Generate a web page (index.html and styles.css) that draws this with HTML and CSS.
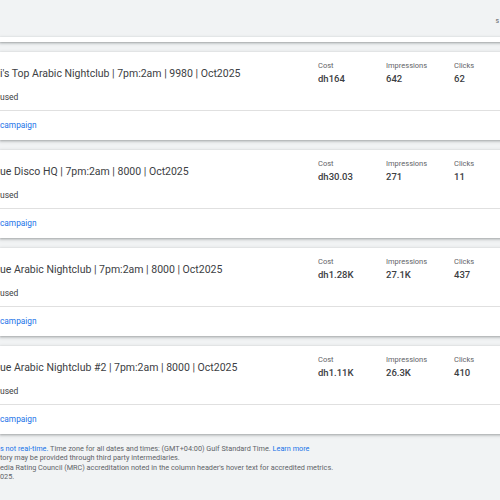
FILE: index.html
```html
<!DOCTYPE html>
<html>
<head>
<meta charset="utf-8">
<link rel="stylesheet" href="styles.css">
</head>
<body>
<div class="page">
  <div class="topbar"><span class="topbar-text">s</span></div>
  <div class="strip"></div>
  <div class="list">
    <div class="card">
      <div class="card-main">
        <div class="info">
          <div class="title">i's Top Arabic Nightclub | 7pm:2am | 9980 | Oct2025</div>
          <div class="status">used</div>
        </div>
        <div class="metric"><div class="label">Cost</div><div class="value">dh164</div></div>
        <div class="metric"><div class="label">Impressions</div><div class="value">642</div></div>
        <div class="metric"><div class="label">Clicks</div><div class="value">62</div></div>
      </div>
      <div class="card-foot"><a class="link">campaign</a></div>
    </div>
    <div class="card">
      <div class="card-main">
        <div class="info">
          <div class="title">ue Disco HQ | 7pm:2am | 8000 | Oct2025</div>
          <div class="status">used</div>
        </div>
        <div class="metric"><div class="label">Cost</div><div class="value">dh30.03</div></div>
        <div class="metric"><div class="label">Impressions</div><div class="value">271</div></div>
        <div class="metric"><div class="label">Clicks</div><div class="value">11</div></div>
      </div>
      <div class="card-foot"><a class="link">campaign</a></div>
    </div>
    <div class="card">
      <div class="card-main">
        <div class="info">
          <div class="title">ue Arabic Nightclub | 7pm:2am | 8000 | Oct2025</div>
          <div class="status">used</div>
        </div>
        <div class="metric"><div class="label">Cost</div><div class="value">dh1.28K</div></div>
        <div class="metric"><div class="label">Impressions</div><div class="value">27.1K</div></div>
        <div class="metric"><div class="label">Clicks</div><div class="value">437</div></div>
      </div>
      <div class="card-foot"><a class="link">campaign</a></div>
    </div>
    <div class="card">
      <div class="card-main">
        <div class="info">
          <div class="title">ue Arabic Nightclub #2 | 7pm:2am | 8000 | Oct2025</div>
          <div class="status">used</div>
        </div>
        <div class="metric"><div class="label">Cost</div><div class="value">dh1.11K</div></div>
        <div class="metric"><div class="label">Impressions</div><div class="value">26.3K</div></div>
        <div class="metric"><div class="label">Clicks</div><div class="value">410</div></div>
      </div>
      <div class="card-foot"><a class="link">campaign</a></div>
    </div>
  </div>
  <div class="footer">
    <div class="fline"><a class="flink">s not real-time.</a> Time zone for all dates and times: (GMT+04:00) Gulf Standard Time. <a class="flink">Learn more</a></div>
    <div class="fline">tory may be provided through third party intermediaries.</div>
    <div class="fline">edia Rating Council (MRC) accreditation noted in the column header's hover text for accredited metrics.</div>
    <div class="fline">025.</div>
  </div>
</div>
</body>
</html>
```
FILE: styles.css
```css
html, body {
  margin: 0;
  padding: 0;
}
body {
  width: 500px;
  height: 500px;
  overflow: hidden;
  background: #f1f3f4;
  font-family: Roboto, "Liberation Sans", sans-serif;
  color: #3c4043;
}
.page {
  width: 500px;
}
.topbar {
  height: 37px;
  display: flex;
  justify-content: flex-end;
  align-items: flex-start;
}
.topbar-text {
  font-size: 7px;
  line-height: 10px;
  margin-top: 16px;
  margin-right: 1px;
  color: #5f6368;
}
.strip {
  height: 5px;
  background: #fff;
  margin-right: -40px;
  box-shadow: 0 1px 2px 0 rgba(60,64,67,.3), 0 1px 3px 1px rgba(60,64,67,.15);
}
.list {
  display: flex;
  flex-direction: column;
  gap: 10px;
  padding-top: 10px;
}
.card {
  background: #fff;
  margin-right: -40px;
  box-shadow: 0 1px 2px 0 rgba(60,64,67,.3), 0 1px 3px 1px rgba(60,64,67,.15);
}
.card-main {
  display: grid;
  grid-template-columns: 318px 68px 68px 68px;
  height: 58px;
  border-bottom: 1px solid #e0e0e0;
}
.title {
  font-size: 10.5px;
  line-height: 16px;
  padding-top: 14px;
  color: #3c4043;
  white-space: nowrap;
}
.status {
  font-size: 8.5px;
  line-height: 12px;
  margin-top: 9px;
  color: #3c4043;
}
.metric {
  padding-top: 8px;
}
.label {
  font-size: 7.5px;
  line-height: 11px;
  color: #5f6368;
}
.value {
  font-size: 9.5px;
  line-height: 13px;
  margin-top: 1px;
  font-weight: 500;
  color: #3c4043;
}
.card-foot {
  height: 29px;
  padding-top: 8px;
  box-sizing: border-box;
}
.link {
  font-size: 8.3px;
  line-height: 12px;
  color: #1a73e8;
  display: block;
}
.footer {
  padding-top: 10px;
  font-size: 7.3px;
  line-height: 9.3px;
  color: #5f6368;
}
.fline {
  white-space: nowrap;
}
.flink {
  color: #1a73e8;
}
```
